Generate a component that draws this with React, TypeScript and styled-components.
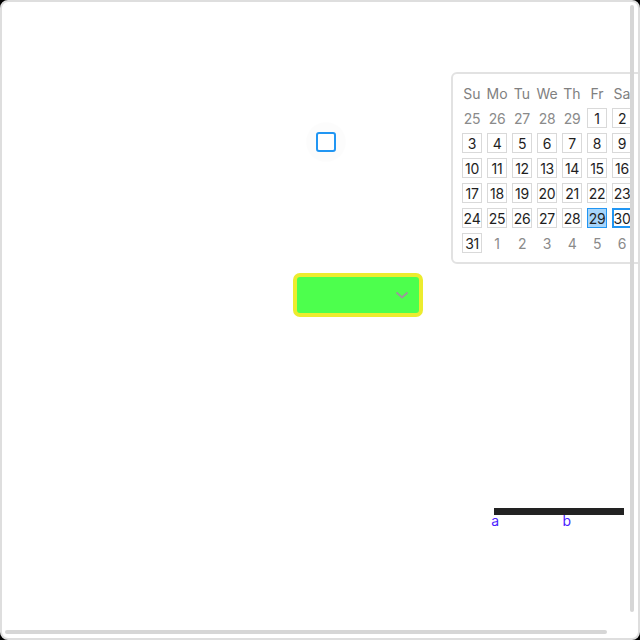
import React from "react";
import styled, { createGlobalStyle } from "styled-components";

const GlobalStyle = createGlobalStyle`
  html, body {
    margin: 0;
    padding: 0;
    background: #000;
  }
  body {
    font-family: "Inter", "Noto Sans", sans-serif;
  }
`;

const Frame = styled.div`
  position: relative;
  width: 640px;
  height: 640px;
  box-sizing: border-box;
  border: 2px solid #dedede;
  border-radius: 8px;
  background: #fff;
  overflow: hidden;
`;

const Stage = styled.div`
  display: flex;
  flex-direction: column;
  padding-top: 128px;
`;

const Row = styled.div<{ $left: number; $top?: number }>`
  display: flex;
  padding-left: ${p => p.$left}px;
  margin-top: ${p => p.$top ?? 0}px;
`;

const CheckWrap = styled.div`
  position: relative;
  width: 20px;
  height: 20px;
`;

const Ripple = styled.div`
  position: absolute;
  left: -10px;
  top: -10px;
  width: 40px;
  height: 40px;
  border-radius: 50%;
  background: rgba(0, 0, 0, 0.01);
`;

const CheckBox = styled.div`
  position: relative;
  width: 20px;
  height: 20px;
  box-sizing: border-box;
  border: 2px solid #2196f3;
  border-radius: 3px;
  background: #fff;
`;

const Select = styled.div`
  display: flex;
  align-items: center;
  justify-content: flex-end;
  width: 130px;
  height: 44px;
  box-sizing: border-box;
  border: 4px solid #ecec2e;
  border-radius: 7px;
  background: #4dff4d;
  padding-right: 10px;
`;

const Slider = styled.div`
  position: relative;
  width: 130px;
  height: 26px;
`;

const Track = styled.div`
  height: 7px;
  background: #222;
`;

const Mark = styled.span`
  position: absolute;
  top: 5px;
  transform: translateX(-50%);
  font-size: 14px;
  line-height: 16px;
  color: #4a1dff;
`;

const Calendar = styled.div`
  position: absolute;
  left: 449px;
  top: 70px;
  box-sizing: border-box;
  border: 2px solid #e2e2e2;
  border-radius: 6px;
  background: #fff;
  padding: 9px;
`;

const Grid = styled.div`
  display: grid;
  grid-template-columns: repeat(7, 20px);
  grid-auto-rows: 20px;
  gap: 5px;
`;

const Head = styled.div`
  display: flex;
  align-items: center;
  justify-content: center;
  font-size: 14px;
  color: #808080;
  white-space: nowrap;
`;

const Day = styled.div<{ $muted?: boolean; $selected?: boolean; $today?: boolean }>`
  display: flex;
  align-items: center;
  justify-content: center;
  box-sizing: border-box;
  font-size: 14px;
  letter-spacing: -0.3px;
  color: ${p => (p.$muted ? "#8a8a8a" : "#1e1e1e")};
  border: ${p =>
    p.$muted
      ? "none"
      : p.$today
      ? "2px solid #2196f3"
      : p.$selected
      ? "1px solid #2196f3"
      : "1px solid #d9d9d9"};
  background: ${p => (p.$selected ? "#a6d4fa" : "transparent")};
`;

const HBar = styled.div`
  position: absolute;
  left: 3px;
  bottom: 4px;
  width: 602px;
  height: 4px;
  border-radius: 2px;
  background: #d6d6d6;
`;

const VBar = styled.div`
  position: absolute;
  right: 4px;
  top: 3px;
  width: 4px;
  height: 607px;
  border-radius: 2px;
  background: #d6d6d6;
`;

type IDay = { n: number; muted?: boolean };

const heads = ["Su", "Mo", "Tu", "We", "Th", "Fr", "Sa"];

const days: IDay[] = [
  ...[25, 26, 27, 28, 29].map(n => ({ n, muted: true })),
  ...Array.from({ length: 31 }, (_, i) => ({ n: i + 1 })),
  ...[1, 2, 3, 4, 5, 6].map(n => ({ n, muted: true }))
];

const marks = [
  { label: "a", at: 1 },
  { label: "b", at: 56 }
];

export default function App() {
  return (
    <>
      <GlobalStyle />
      <Frame>
        <Stage>
          <Row $left={314} $top={2}>
            <CheckWrap>
              <Ripple />
              <CheckBox />
            </CheckWrap>
          </Row>
          <Row $left={291} $top={121}>
            <Select>
              <svg width="14" height="8" viewBox="0 0 14 8">
                <path d="M1.5 1.5 L7 6.5 L12.5 1.5" fill="none" stroke="#9a9a9a" strokeWidth="2" />
              </svg>
            </Select>
          </Row>
          <Row $left={492} $top={191}>
            <Slider>
              <Track />
              {marks.map(m => (
                <Mark key={m.label} style={{ left: `${m.at}%` }}>
                  {m.label}
                </Mark>
              ))}
            </Slider>
          </Row>
        </Stage>

        <Calendar>
          <Grid>
            {heads.map(h => (
              <Head key={h}>{h}</Head>
            ))}
            {days.map((d, i) => (
              <Day
                key={i}
                $muted={d.muted}
                $selected={!d.muted && d.n === 29}
                $today={!d.muted && d.n === 30}
              >
                {d.n}
              </Day>
            ))}
          </Grid>
        </Calendar>

        <HBar />
        <VBar />
      </Frame>
    </>
  );
}
